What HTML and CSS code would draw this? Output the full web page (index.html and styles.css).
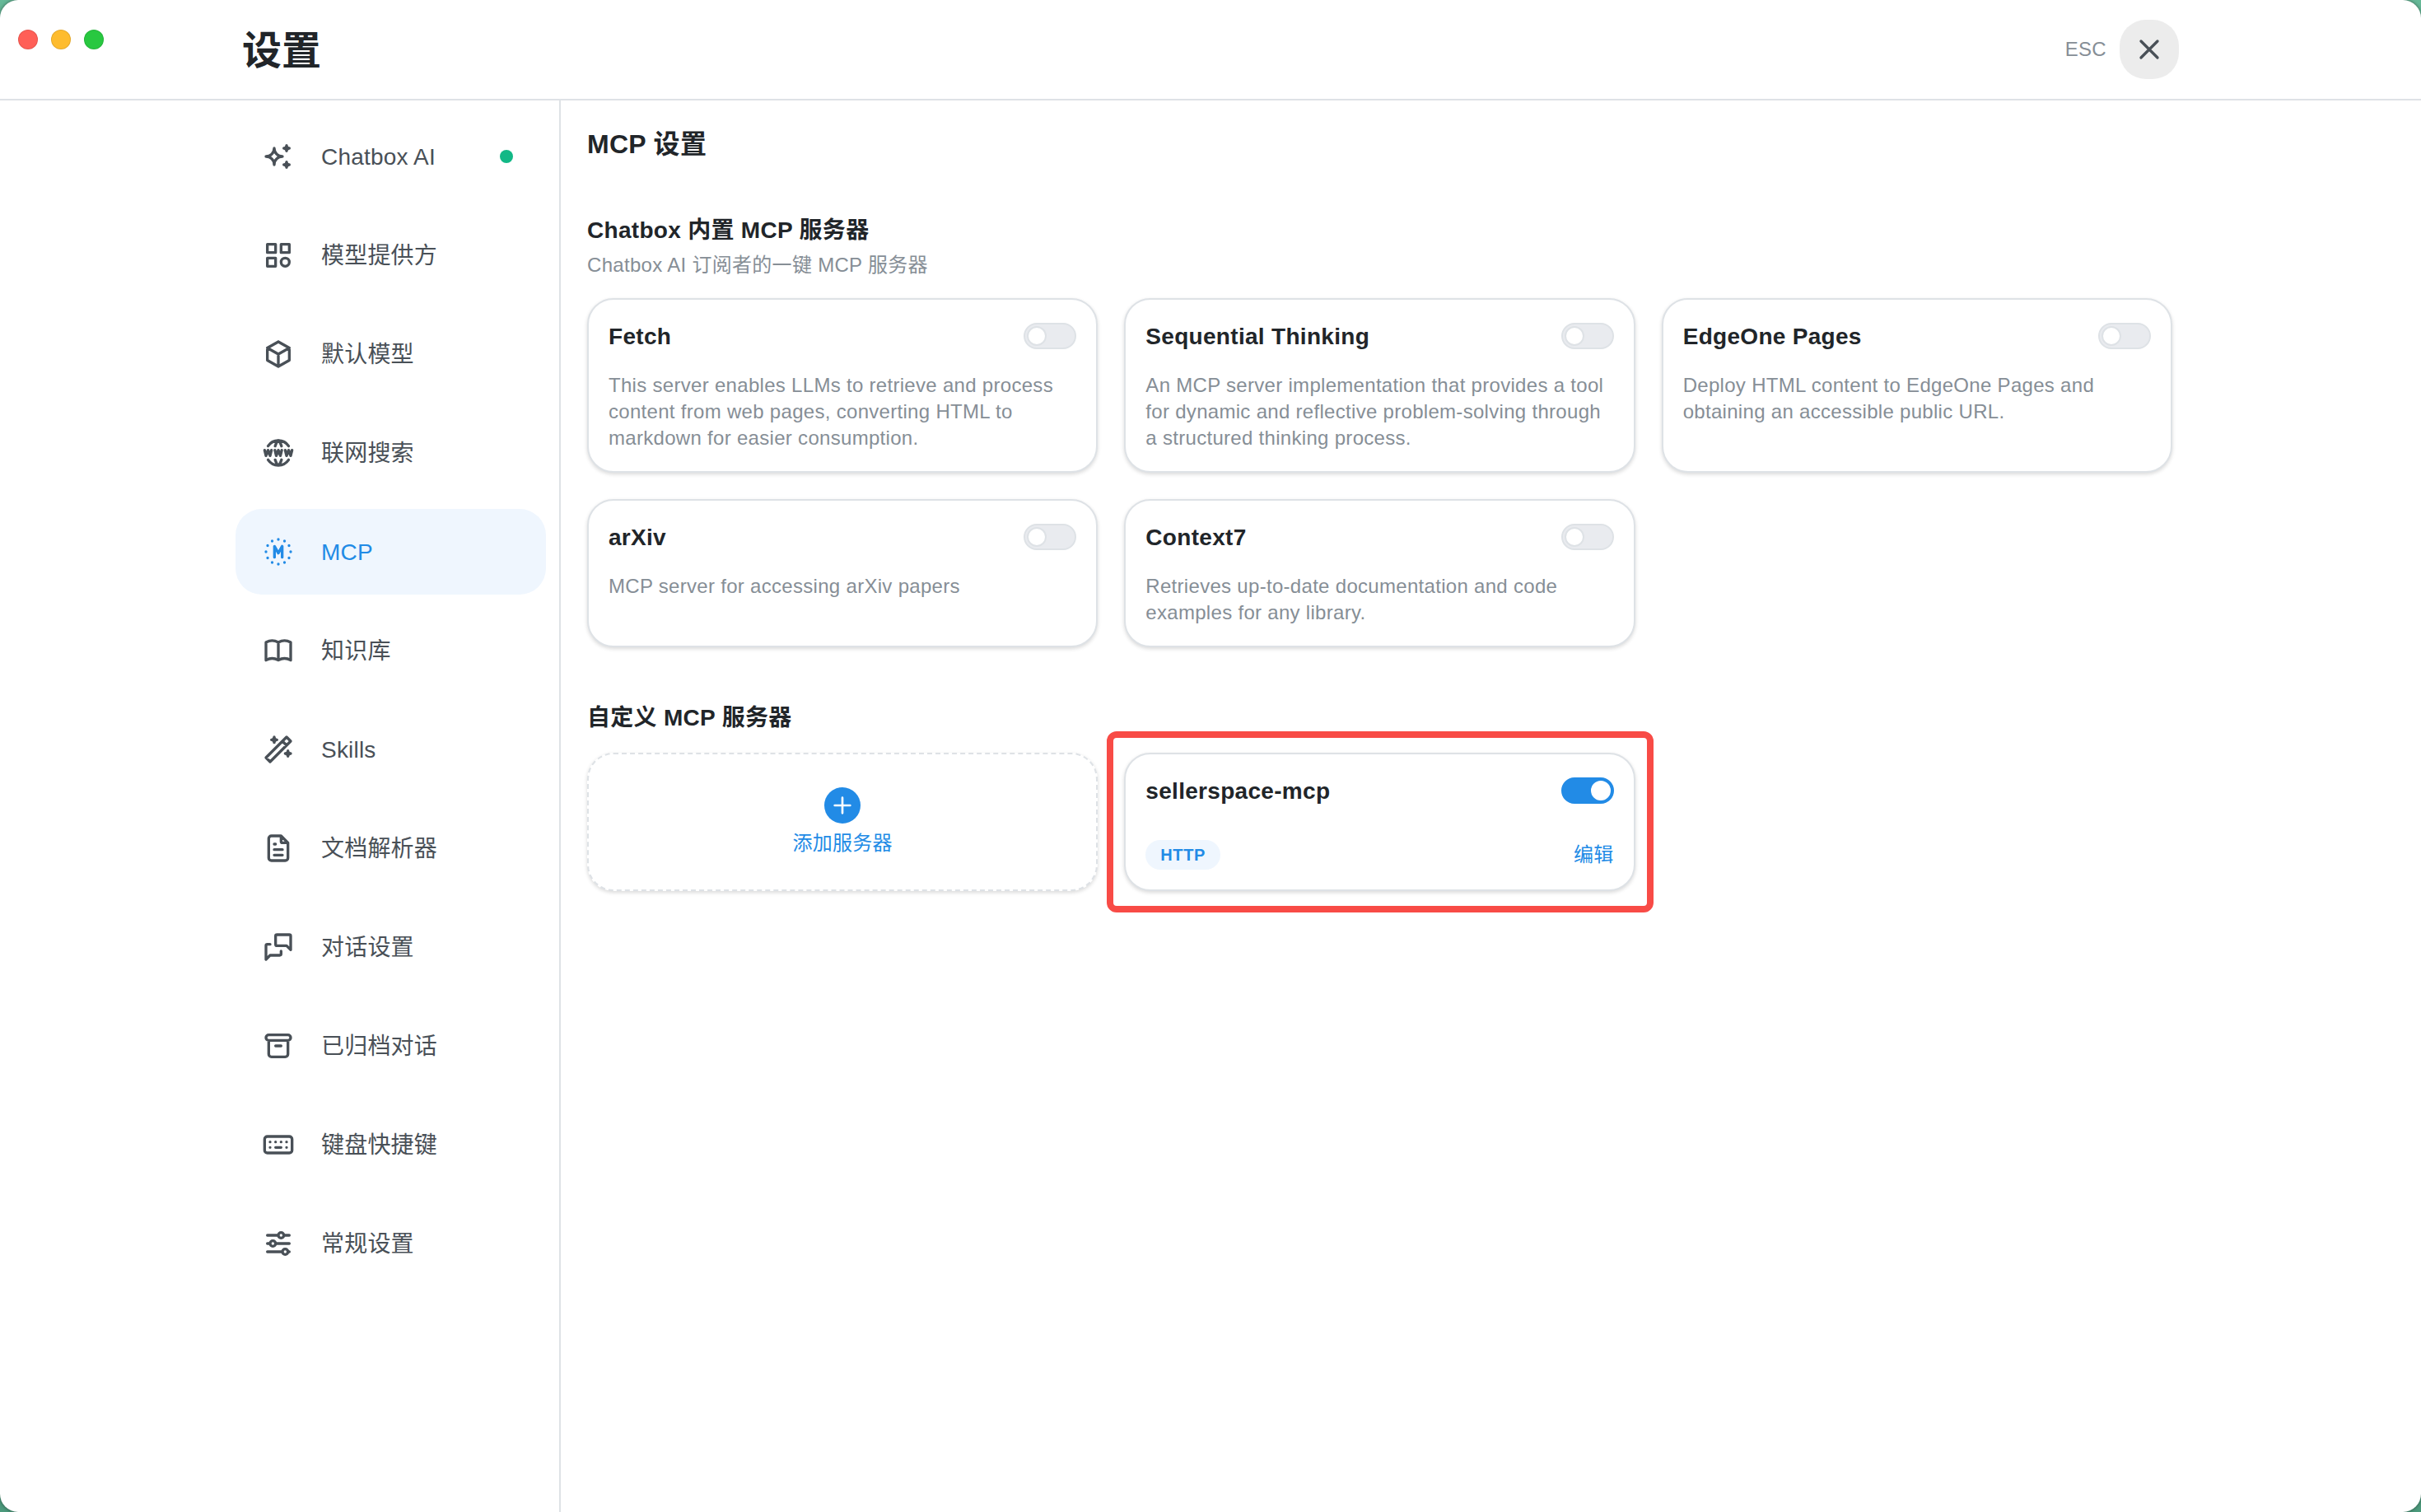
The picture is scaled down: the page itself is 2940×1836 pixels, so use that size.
FILE: index.html
```html
<!DOCTYPE html>
<html lang="zh-CN">
<head>
<meta charset="utf-8">
<title>设置</title>
<link rel="stylesheet" href="styles.css">
</head>
<body>
<div class="window">
  <div class="traffic-lights"><span class="light close"></span><span class="light minimize"></span><span class="light zoom"></span></div>
  <header class="header">
    <div class="header-inner">
      <h1 class="page-title">设置</h1>
      <div class="dismiss">
        <span class="esc">ESC</span>
        <button class="close-button" aria-label="关闭"><svg class="icon" viewBox="0 0 24 24"><path d="M18 6l-12 12M6 6l12 12"/></svg></button>
      </div>
    </div>
  </header>
  <div class="body">
    <nav class="sidebar">
      <a class="nav-item"><svg class="icon" viewBox="0 0 24 24"><path d="M16 18a2 2 0 0 1 2 2a2 2 0 0 1 2 -2a2 2 0 0 1 -2 -2a2 2 0 0 1 -2 2zm0 -12a2 2 0 0 1 2 2a2 2 0 0 1 2 -2a2 2 0 0 1 -2 -2a2 2 0 0 1 -2 2zm-7 12a6 6 0 0 1 6 -6a6 6 0 0 1 -6 -6a6 6 0 0 1 -6 6a6 6 0 0 1 6 6z"/></svg><span class="nav-label">Chatbox AI</span><span class="status-dot"></span></a>
      <a class="nav-item"><svg class="icon" viewBox="0 0 24 24"><path d="M4 4h6v6h-6zM14 4h6v6h-6zM4 14h6v6h-6zM14 17a3 3 0 1 0 6 0a3 3 0 1 0 -6 0"/></svg><span class="nav-label">模型提供方</span></a>
      <a class="nav-item"><svg class="icon" viewBox="0 0 24 24"><path d="M12 3l8 4.5v9l-8 4.5l-8 -4.5v-9l8 -4.5M12 12l8 -4.5M12 12v9M12 12l-8 -4.5"/></svg><span class="nav-label">默认模型</span></a>
      <a class="nav-item"><svg class="icon" viewBox="0 0 24 24"><path d="M19.5 7a9 9 0 0 0 -7.5 -4a8.991 8.991 0 0 0 -7.484 4M11.5 3a16.989 16.989 0 0 0 -1.826 4M12.5 3a16.989 16.989 0 0 1 1.828 4M19.5 17a9 9 0 0 1 -7.5 4a8.991 8.991 0 0 1 -7.484 -4M11.5 21a16.989 16.989 0 0 1 -1.826 -4M12.5 21a16.989 16.989 0 0 0 1.828 -4M2 10l1 4l1.5 -4l1.5 4l1 -4M17 10l1 4l1.5 -4l1.5 4l1 -4M9.5 10l1 4l1.5 -4l1.5 4l1 -4"/></svg><span class="nav-label">联网搜索</span></a>
      <a class="nav-item active"><svg class="icon" viewBox="0 0 24 24"><path d="M9.2 16v-8l2.8 5l2.8 -5v8M7.5 4.21v.01M4.21 7.5v.01M3 12v.01M4.21 16.5v.01M7.5 19.79v.01M12 21v.01M16.5 19.79v.01M19.79 16.5v.01M21 12v.01M19.79 7.5v.01M16.5 4.21v.01M12 3v.01"/></svg><span class="nav-label">MCP</span></a>
      <a class="nav-item"><svg class="icon" viewBox="0 0 24 24"><path d="M3 19a9 9 0 0 1 9 0a9 9 0 0 1 9 0M3 6a9 9 0 0 1 9 0a9 9 0 0 1 9 0M3 6v13M12 6v13M21 6v13"/></svg><span class="nav-label">知识库</span></a>
      <a class="nav-item"><svg class="icon" viewBox="0 0 24 24"><path d="M6 21l15 -15l-3 -3l-15 15l3 3M15 6l3 3M9 3a2 2 0 0 0 2 2a2 2 0 0 0 -2 2a2 2 0 0 0 -2 -2a2 2 0 0 0 2 -2M19 13a2 2 0 0 0 2 2a2 2 0 0 0 -2 2a2 2 0 0 0 -2 -2a2 2 0 0 0 2 -2"/></svg><span class="nav-label">Skills</span></a>
      <a class="nav-item"><svg class="icon" viewBox="0 0 24 24"><path d="M14 3v4a1 1 0 0 0 1 1h4M17 21h-10a2 2 0 0 1 -2 -2v-14a2 2 0 0 1 2 -2h7l5 5v11a2 2 0 0 1 -2 2zM9 9h1M9 13h6M9 17h6"/></svg><span class="nav-label">文档解析器</span></a>
      <a class="nav-item"><svg class="icon" viewBox="0 0 24 24"><path d="M21 14l-3 -3h-7a1 1 0 0 1 -1 -1v-6a1 1 0 0 1 1 -1h9a1 1 0 0 1 1 1v10M14 15v2a1 1 0 0 1 -1 1h-7l-3 3v-10a1 1 0 0 1 1 -1h2"/></svg><span class="nav-label">对话设置</span></a>
      <a class="nav-item"><svg class="icon" viewBox="0 0 24 24"><path d="M3 6a2 2 0 0 1 2 -2h14a2 2 0 0 1 2 2a2 2 0 0 1 -2 2h-14a2 2 0 0 1 -2 -2zM5 8v10a2 2 0 0 0 2 2h10a2 2 0 0 0 2 -2v-10M10 12h4"/></svg><span class="nav-label">已归档对话</span></a>
      <a class="nav-item"><svg class="icon" viewBox="0 0 24 24"><path d="M2 8a2 2 0 0 1 2 -2h16a2 2 0 0 1 2 2v8a2 2 0 0 1 -2 2h-16a2 2 0 0 1 -2 -2zM6 10v.01M10 10v.01M14 10v.01M18 10v.01M6 14v.01M18 14v.01M10 14l4 .01"/></svg><span class="nav-label">键盘快捷键</span></a>
      <a class="nav-item"><svg class="icon" viewBox="0 0 24 24"><path d="M12 6a2 2 0 1 0 4 0a2 2 0 1 0 -4 0M4 6h8M16 6h4M6 12a2 2 0 1 0 4 0a2 2 0 1 0 -4 0M4 12h2M10 12h10M15 18a2 2 0 1 0 4 0a2 2 0 1 0 -4 0M4 18h11M19 18h1"/></svg><span class="nav-label">常规设置</span></a>
    </nav>
    <main class="main">
      <h2 class="main-title">MCP 设置</h2>
      <section class="section">
        <h3 class="section-title">Chatbox 内置 MCP 服务器</h3>
        <p class="section-note">Chatbox AI 订阅者的一键 MCP 服务器</p>
        <div class="cards">
          <article class="card">
            <div class="card-head"><h4 class="card-title">Fetch</h4><span class="switch"><span class="thumb"></span></span></div>
            <p class="card-text">This server enables LLMs to retrieve and process content from web pages, converting HTML to markdown for easier consumption.</p>
          </article>
          <article class="card">
            <div class="card-head"><h4 class="card-title">Sequential Thinking</h4><span class="switch"><span class="thumb"></span></span></div>
            <p class="card-text">An MCP server implementation that provides a tool for dynamic and reflective problem-solving through a structured thinking process.</p>
          </article>
          <article class="card">
            <div class="card-head"><h4 class="card-title">EdgeOne Pages</h4><span class="switch"><span class="thumb"></span></span></div>
            <p class="card-text">Deploy HTML content to EdgeOne Pages and obtaining an accessible public URL.</p>
          </article>
          <article class="card">
            <div class="card-head"><h4 class="card-title">arXiv</h4><span class="switch"><span class="thumb"></span></span></div>
            <p class="card-text">MCP server for accessing arXiv papers</p>
          </article>
          <article class="card">
            <div class="card-head"><h4 class="card-title">Context7</h4><span class="switch"><span class="thumb"></span></span></div>
            <p class="card-text">Retrieves up-to-date documentation and code examples for any library.</p>
          </article>
        </div>
      </section>
      <section class="section custom">
        <h3 class="section-title">自定义 MCP 服务器</h3>
        <div class="cards">
          <article class="card add-card">
            <span class="add-circle"><svg class="icon add-icon" viewBox="0 0 24 24"><path d="M12 5v14M5 12h14"/></svg></span>
            <span class="add-label">添加服务器</span>
          </article>
          <article class="card highlighted">
            <div class="card-head"><h4 class="card-title">sellerspace-mcp</h4><span class="switch on"><span class="thumb"></span></span></div>
            <div class="card-foot"><span class="badge">HTTP</span><a class="edit">编辑</a></div>
          </article>
        </div>
      </section>
    </main>
  </div>
</div>
</body>
</html>
```
FILE: styles.css
```css
* { box-sizing: border-box; }
html, body, h1, h2, h3, h4, p { margin: 0; }
body {
  height: 1836px;
  overflow: hidden;
  background: linear-gradient(#66b998, #4c9a7c);
  color: #212529;
  font-family: "Liberation Sans", "Noto Sans CJK SC", sans-serif;
  font-size: 28px;
}
.window {
  position: relative;
  display: flex;
  flex-direction: column;
  height: 1836px;
  border-radius: 22px;
  background: #fff;
  box-shadow: 0 0 4px rgba(0, 0, 0, .5);
}
.traffic-lights {
  position: absolute;
  left: 22px;
  top: 36px;
  display: flex;
  gap: 16px;
}
.light { width: 24px; height: 24px; border-radius: 50%; border: 1px solid rgba(0, 0, 0, .1); }
.close { background: #ff5f57; }
.minimize { background: #febc2e; }
.zoom { background: #28c840; }
.header { height: 122px; flex: none; border-bottom: 2px solid #dee2e6; }
.header-inner {
  display: flex;
  align-items: center;
  justify-content: space-between;
  width: 2400px;
  height: 120px;
  margin: 0 auto;
  padding: 0 24px;
}
.page-title { padding-top: 4px; font-size: 48px; font-weight: 600; line-height: 60px; }
.dismiss { display: flex; align-items: center; gap: 16px; }
.esc { color: #868e96; font-size: 24px; line-height: 36px; letter-spacing: .3px; }
.close-button {
  display: flex;
  align-items: center;
  justify-content: center;
  width: 72px;
  height: 72px;
  padding: 0;
  border: 0;
  border-radius: 32px;
  background: #ececec;
  color: #495057;
}
.icon {
  flex: none;
  width: 40px;
  height: 40px;
  fill: none;
  stroke: currentColor;
  stroke-width: 2;
  stroke-linecap: round;
  stroke-linejoin: round;
}
.body { display: flex; flex: 1; width: 2400px; margin: 0 auto; }
.sidebar {
  display: flex;
  flex-direction: column;
  gap: 16px;
  width: 411px;
  padding: 16px;
  border-right: 2px solid #dee2e6;
}
.nav-item {
  display: flex;
  align-items: center;
  gap: 32px;
  height: 104px;
  padding: 0 32px;
  border-radius: 32px;
  color: #495057;
}
.nav-item.active { background: #eff6fe; color: #228be6; }
.nav-label { flex: 1; padding-top: 2px; line-height: 40px; letter-spacing: .2px; }
.status-dot { width: 16px; height: 16px; margin-right: 8px; border-radius: 50%; background: #12b886; }
.main { flex: 1; padding: 32px; }
.main-title { font-size: 32px; font-weight: 600; line-height: 42px; letter-spacing: .3px; }
.section { margin-top: 62px; }
.section.custom { margin-top: 64px; }
.section-title { font-size: 28px; font-weight: 600; line-height: 44px; letter-spacing: .3px; }
.section-note { color: #868e96; font-size: 24px; line-height: 37px; margin-top: 1px; letter-spacing: .3px; }
.cards {
  display: grid;
  grid-template-columns: repeat(3, 1fr);
  gap: 32px;
  margin-top: 22px;
}
.custom .cards { margin-top: 20px; }
.card {
  padding: 24px;
  border: 2px solid #dee2e6;
  border-radius: 32px;
  background: #fff;
  box-shadow: 0 2px 6px rgba(0, 0, 0, .05), 0 2px 4px rgba(0, 0, 0, .1);
}
.card-head { display: flex; align-items: center; justify-content: space-between; height: 40px; }
.card-title { padding-top: 2px; font-size: 28px; font-weight: 600; line-height: 40px; letter-spacing: .3px; }
.card-text { margin-top: 24px; color: #868e96; font-size: 24px; line-height: 32px; letter-spacing: .3px; }
.switch {
  display: flex;
  align-items: center;
  width: 64px;
  height: 32px;
  padding: 0 2px;
  border: 2px solid #dee2e6;
  border-radius: 16px;
  background: #e9ebef;
}
.thumb { width: 24px; height: 24px; border: 2px solid #dee2e6; border-radius: 50%; background: #fff; }
.switch.on { justify-content: flex-end; border-color: #228be6; background: #228be6; }
.switch.on .thumb { border-color: #fff; }
.add-card {
  display: flex;
  flex-direction: column;
  align-items: center;
  justify-content: center;
  gap: 8px;
  height: 168px;
  border-style: dashed;
  color: #228be6;
}
.add-circle {
  display: flex;
  align-items: center;
  justify-content: center;
  width: 44px;
  height: 44px;
  border-radius: 50%;
  background: #228be6;
  color: #fff;
}
.add-icon { width: 32px; height: 32px; }
.add-label { font-size: 24px; line-height: 32px; letter-spacing: .3px; }
.highlighted { position: relative; }
.highlighted::after {
  content: "";
  position: absolute;
  inset: -28px -24px -28px -23px;
  border: 8px solid #f84b46;
  border-radius: 12px;
}
.card-foot { display: flex; align-items: center; justify-content: space-between; height: 36px; margin-top: 40px; }
.badge {
  height: 36px;
  padding: 0 18px;
  border-radius: 18px;
  background: #eff6fe;
  color: #228be6;
  font-size: 20px;
  font-weight: 700;
  line-height: 36px;
  letter-spacing: .6px;
}
.edit { color: #228be6; font-size: 24px; line-height: 36px; letter-spacing: .3px; }
```
